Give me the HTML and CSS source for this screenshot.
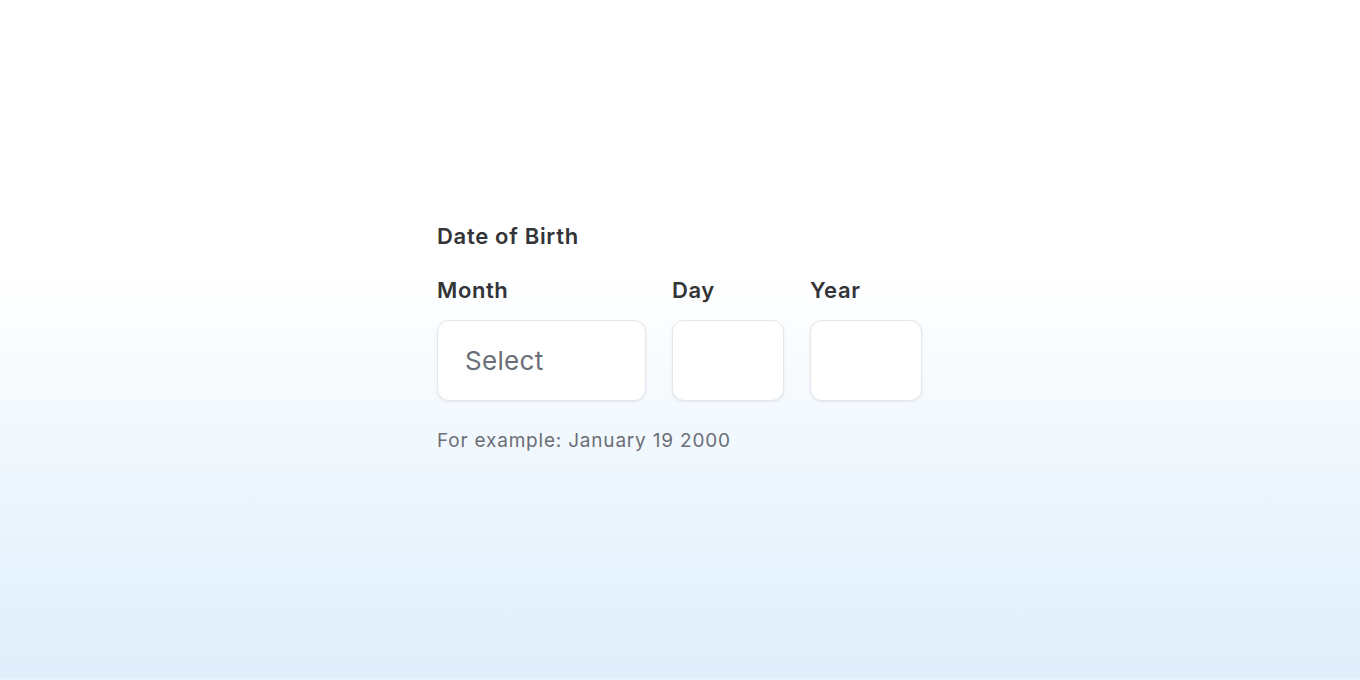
FILE: index.html
```html
<!DOCTYPE html>
<html lang="en">
<head>
  <meta charset="UTF-8">
  <meta name="viewport" content="width=device-width, initial-scale=1.0">
  <title>Date of Birth</title>
  <link rel="stylesheet" href="styles.css">
</head>
<body>
  <main class="page">
    <fieldset class="dob">
      <legend class="dob-title">Date of Birth</legend>
      <div class="dob-fields">
        <div class="field field-month">
          <label for="month">Month</label>
          <div class="box" id="month">Select</div>
        </div>
        <div class="field field-small">
          <label for="day">Day</label>
          <div class="box" id="day"></div>
        </div>
        <div class="field field-small">
          <label for="year">Year</label>
          <div class="box" id="year"></div>
        </div>
      </div>
      <p class="hint">For example: January 19 2000</p>
    </fieldset>
  </main>
</body>
</html>
```

FILE: styles.css
```css
html, body {
  margin: 0;
  padding: 0;
  height: 100%;
}

body {
  font-family: Inter, "Noto Sans", Arial, sans-serif;
  background: linear-gradient(to bottom, #ffffff 0%, #ffffff 40%, #f5fafe 58%, #e9f4fd 78%, #dfeefb 99.6%, #eaf5fd 100%);
  color: #333438;
}

.page {
  height: 680px;
  box-sizing: border-box;
  padding: 222px 0 0 437px;
}

.dob {
  border: none;
  margin: 0;
  padding: 0;
}

.dob-title {
  padding: 0;
  font-size: 22px;
  font-weight: 600;
  line-height: 28px;
  letter-spacing: 0.7px;
  color: #333438;
}

.dob-fields {
  display: flex;
  gap: 26px;
  margin-top: 26px;
}

.field label {
  display: block;
  font-size: 22px;
  font-weight: 600;
  line-height: 28px;
  letter-spacing: 0.6px;
  margin-bottom: 16px;
  color: #333438;
}

.box {
  box-sizing: border-box;
  height: 81px;
  background: #fff;
  border: 1px solid #e4e6ea;
  border-radius: 12px;
  box-shadow: 0 1px 3px rgba(30, 40, 60, 0.08);
  display: flex;
  align-items: center;
  padding-left: 27px;
  font-size: 26px;
  letter-spacing: 0.3px;
  color: #6b6e76;
}

.field-month .box {
  width: 209px;
}

.field-small .box {
  width: 112px;
}

.hint {
  margin: 28px 0 0;
  font-size: 19px;
  line-height: 24px;
  letter-spacing: 0.8px;
  color: #6b6e76;
}
```
